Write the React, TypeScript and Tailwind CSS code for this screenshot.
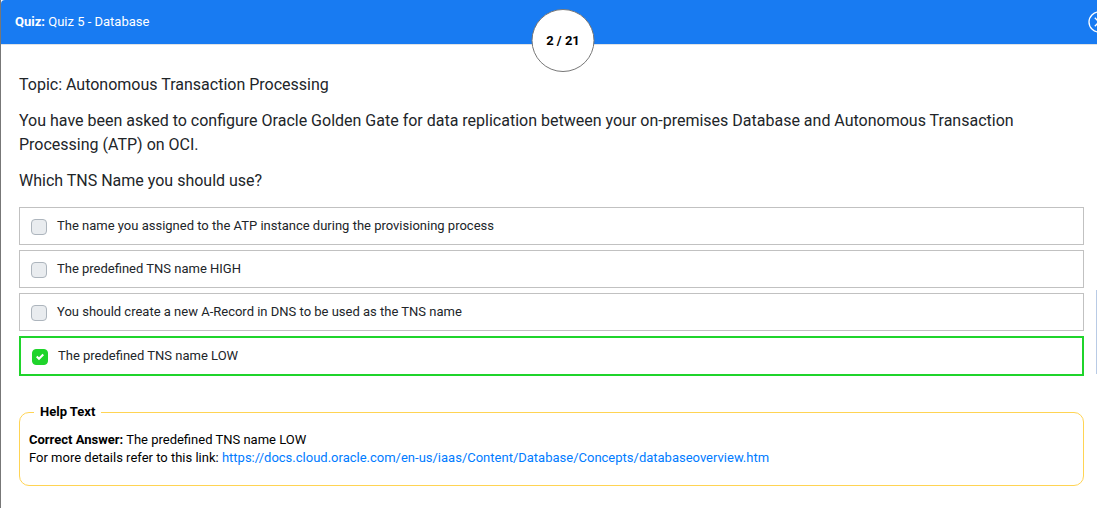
import { useState } from "react";

const options = [
  "The name you assigned to the ATP instance during the provisioning process",
  "The predefined TNS name HIGH",
  "You should create a new A-Record in DNS to be used as the TNS name",
  "The predefined TNS name LOW",
];

function QuizHeader() {
  return (
    <header className="relative flex h-[45px] items-center justify-between rounded-tl border-b border-[#dee2e6] bg-[#187bf2] pl-3.5 text-white">
      <h1 className="text-[13px] leading-5">
        <b>Quiz:</b> Quiz 5 - Database
      </h1>
      <button type="button" aria-label="Close" className="-mr-[13px] shrink-0">
        <svg width="22" height="22" viewBox="0 0 22 22" fill="none" stroke="currentColor" strokeWidth="1.3">
          <circle cx="11" cy="11" r="10" />
          <path d="M6.8 6.8l8.4 8.4M15.2 6.8l-8.4 8.4" />
        </svg>
      </button>
      <div className="absolute top-[9px] left-1/2 ml-3.5 flex size-[63px] -translate-x-1/2 items-center justify-center rounded-full border border-[#777777] bg-white text-[13px] leading-5 font-bold text-black">
        2 / 21
      </div>
    </header>
  );
}

function Option({ text, id, checked, onChange }: { text: string; id: string; checked: boolean; onChange: () => void }) {
  return (
    <li className={checked ? "border-2 border-[#1fd42b]" : "border border-[#c1c1c1]"}>
      <label htmlFor={id} className="flex h-9 items-center gap-2.5 pl-[11px] text-[13px] leading-5">
        <span className="relative mt-0.5 size-4 shrink-0">
          <input
            id={id}
            type="checkbox"
            checked={checked}
            onChange={onChange}
            className="block size-4 appearance-none rounded border border-[#adb5bd] bg-[#e9ecef] checked:border-[#1fd42b] checked:bg-[#1fd42b]"
          />
          {checked && (
            <svg className="pointer-events-none absolute top-1 left-1" width="8" height="8" viewBox="0 0 8 8" fill="#fff">
              <path d="M6.564.75l-3.59 3.612-1.538-1.55L0 4.26 2.974 7.25 8 2.193z" />
            </svg>
          )}
        </span>
        <span>{text}</span>
      </label>
    </li>
  );
}

export default function App() {
  const [selected, setSelected] = useState(3);
  return (
    <div className="relative min-h-screen overflow-x-clip border-l border-[#777777] bg-white font-['Roboto',sans-serif] text-[#212529]">
      <QuizHeader />
      <main className="pt-7 pr-[13px] pb-5 pl-[18px]">
        <div className="space-y-3 text-base leading-6">
          <p>Topic: Autonomous Transaction Processing</p>
          <p>
            You have been asked to configure Oracle Golden Gate for data replication between your on-premises Database
            and Autonomous Transaction Processing (ATP) on OCI.
          </p>
          <p>Which TNS Name you should use?</p>
        </div>
        <ul className="mt-3.5 flex flex-col gap-[5px]">
          {options.map((text, i) => (
            <Option
              key={text}
              id={`option-${i}`}
              text={text}
              checked={selected === i}
              onChange={() => setSelected(i)}
            />
          ))}
        </ul>
        <fieldset className="mt-[27px] rounded-[10px] border border-[#ffd454] px-[9px] pt-2.5 pb-[18px] text-[13px] leading-[18px] text-black">
          <legend className="ml-[5px] px-1.5 font-bold">Help Text</legend>
          <p>
            <b>Correct Answer:</b> The predefined TNS name LOW
          </p>
          <p>
            For more details refer to this link:{" "}
            <a
              href="https://docs.cloud.oracle.com/en-us/iaas/Content/Database/Concepts/databaseoverview.htm"
              className="text-[#007bff]"
            >
              https://docs.cloud.oracle.com/en-us/iaas/Content/Database/Concepts/databaseoverview.htm
            </a>
          </p>
        </fieldset>
      </main>
      <div className="absolute top-[290px] right-0 h-[84px] w-px bg-[#b9cbe5]" />
    </div>
  );
}
